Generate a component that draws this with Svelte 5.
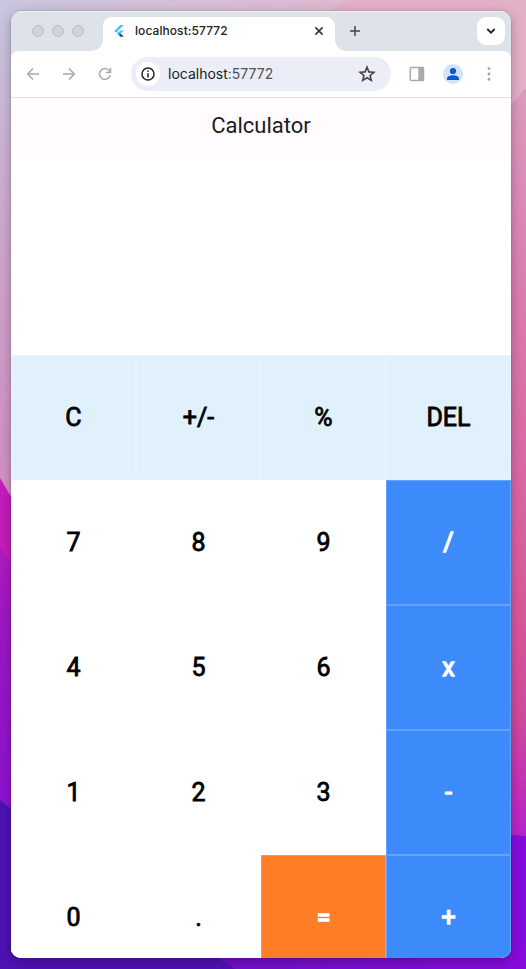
<script>
  const keys = [
    ['C', 'top'], ['+/-', 'top'], ['%', 'top'], ['DEL', 'top'],
    ['7', 'num'], ['8', 'num'], ['9', 'num'], ['/', 'op'],
    ['4', 'num'], ['5', 'num'], ['6', 'num'], ['x', 'op'],
    ['1', 'num'], ['2', 'num'], ['3', 'num'], ['-', 'op'],
    ['0', 'num'], ['.', 'num'], ['=', 'eq'], ['+', 'op']
  ];
</script>

<div class="desktop">
  <svg class="wallpaper" width="526" height="969" viewBox="0 0 526 969" aria-hidden="true">
    <defs>
      <linearGradient id="sky" x1="0" x2="1" y1="0" y2="0">
        <stop offset="0" stop-color="#c9c6df" />
        <stop offset=".45" stop-color="#d9bdd5" />
        <stop offset="1" stop-color="#e6b3cb" />
      </linearGradient>
      <linearGradient id="left" x1="0" x2="0" y1="0" y2="1">
        <stop offset="0" stop-color="#c9c6df" />
        <stop offset=".3" stop-color="#cda9cd" />
        <stop offset=".6" stop-color="#d093c4" />
        <stop offset="1" stop-color="#d38fc4" />
      </linearGradient>
      <linearGradient id="magenta" x1="0" x2="0" y1="0" y2="1">
        <stop offset="0" stop-color="#c71bc0" />
        <stop offset="1" stop-color="#bd1fae" />
      </linearGradient>
      <linearGradient id="violet" x1="0" x2="0" y1="0" y2="1">
        <stop offset="0" stop-color="#b01bbf" />
        <stop offset=".3" stop-color="#9c17c4" />
        <stop offset="1" stop-color="#8a12d2" />
      </linearGradient>
      <linearGradient id="right" x1="0" x2="0" y1="0" y2="1">
        <stop offset="0" stop-color="#dd9bbf" />
        <stop offset=".3" stop-color="#da7bac" />
        <stop offset=".7" stop-color="#d9589b" />
        <stop offset=".84" stop-color="#d1489e" />
        <stop offset=".95" stop-color="#bf2cbd" />
        <stop offset="1" stop-color="#b722c8" />
      </linearGradient>
      <linearGradient id="floor" x1="0" x2="1" y1="0" y2="0">
        <stop offset="0" stop-color="#7010c4" />
        <stop offset="1" stop-color="#860bdc" />
      </linearGradient>
    </defs>
    <rect width="526" height="969" fill="url(#sky)" />
    <rect y="11" width="200" height="700" fill="url(#left)" />
    <path d="M330 11L346 0H526V110H330z" fill="#e3b0c8" />
    <path d="M400 105H511L526 88V840H400z" fill="url(#right)" />
    <path d="M0 478L20 512V640H0z" fill="url(#magenta)" />
    <path d="M0 547L20 578V830H0z" fill="url(#violet)" />
    <path d="M0 800L20 816L240 969H0z" fill="#4e11b4" />
    <path d="M190 940L511 835L526 836V969H235z" fill="url(#floor)" />
  </svg>

  <main class="window">
    <header class="tabs">
      <div class="lights"><i></i><i></i><i></i></div>
      <div class="tab">
        <svg class="favicon" width="16" height="16" viewBox="0 0 16 16">
          <path d="M9.3 2H12.9L5.1 9.8 3.3 8z" fill="#42c5f7" />
          <path d="M9.3 7.4H12.9L9.7 10.6 7.9 8.8z" fill="#42c5f7" />
          <path d="M6.1 10.6L7.9 8.8 9.7 10.6 7.9 12.4z" fill="#29a9e8" />
          <path d="M7.9 12.4L9.7 10.6 12.9 13.7H9.3z" fill="#07569d" />
        </svg>
        <span>localhost:57772</span>
        <svg class="close" width="10" height="10" viewBox="0 0 10 10"><path d="M1.4 1.4L8.6 8.6M8.6 1.4L1.4 8.6" stroke="#333" stroke-width="1.6" /></svg>
      </div>
      <svg class="plus" width="12" height="12" viewBox="0 0 12 12"><path d="M6 1V11M1 6H11" stroke="#444" stroke-width="1.5" /></svg>
      <div class="search">
        <svg width="10" height="8" viewBox="0 0 10 8"><path d="M1.3 2L5 5.7 8.7 2" fill="none" stroke="#202124" stroke-width="1.8" /></svg>
      </div>
    </header>

    <nav class="toolbar">
      <svg width="14" height="14" viewBox="0 0 14 14"><path d="M7 1.5L1.7 7 7 12.5M2 7H13" fill="none" stroke="#aaa" stroke-width="1.5" /></svg>
      <svg class="forward" width="14" height="14" viewBox="0 0 14 14"><path d="M7 1.5L12.3 7 7 12.5M12 7H1" fill="none" stroke="#aaa" stroke-width="1.5" /></svg>
      <svg class="reload" width="14" height="14" viewBox="0 0 14 14"><path d="M12.2 8A5.4 5.4 0 1 1 11.9 4.8M12.5 1V5.5H8" fill="none" stroke="#aaa" stroke-width="1.5" /></svg>
      <div class="address">
        <div class="site">
          <svg width="14" height="14" viewBox="0 0 14 14"><circle cx="7" cy="7" r="6" fill="none" stroke="#222" stroke-width="1.5" /><path d="M7 6.2V10.4M7 3.6V5.1" stroke="#222" stroke-width="1.5" /></svg>
        </div>
        <span>localhost<em>:57772</em></span>
        <svg class="star" width="18" height="18" viewBox="0 0 18 18"><path d="M9 2.2L10.9 6.9 15.9 7.3 12.1 10.5 13.3 15.4 9 12.8 4.7 15.4 5.9 10.5 2.1 7.3 7.1 6.9z" fill="none" stroke="#444" stroke-width="1.6" /></svg>
      </div>
      <svg class="panel" width="16" height="16" viewBox="0 0 16 16"><rect x="1.3" y="1.5" width="13.2" height="13" rx="1" fill="#fff" stroke="#aaa" stroke-width="1.5" /><path d="M9.3 1H14Q15 1 15 2V14Q15 15 14 15H9.3z" fill="#aaa" /></svg>
      <div class="avatar">
        <svg width="14" height="14" viewBox="0 0 14 14"><circle cx="7" cy="4" r="3.1" fill="#0b57d0" /><path d="M1 13V11.5C1 9.4 4.3 8.2 7 8.2S13 9.4 13 11.5V13z" fill="#0b57d0" /></svg>
      </div>
      <svg class="more" width="4" height="16" viewBox="0 0 4 16" fill="#a3a3a3"><circle cx="2" cy="2.6" r="1.4" /><circle cx="2" cy="8" r="1.4" /><circle cx="2" cy="13.4" r="1.4" /></svg>
    </nav>

    <h1>Calculator</h1>
    <div class="display"></div>
    <div class="keypad">
      {#each keys as [label, kind]}
        <button class={kind}>{label}</button>
      {/each}
    </div>
  </main>
</div>

<style>
  .desktop {
    position: relative;
    width: 526px;
    height: 969px;
    padding: 11px 15px 11px 11px;
    box-sizing: border-box;
    overflow: hidden;
    font-family: Roboto, sans-serif;
  }
  .wallpaper { position: absolute; inset: 0; }
  .window {
    position: relative;
    width: 500px;
    height: 947px;
    display: flex;
    flex-direction: column;
    overflow: hidden;
    border-radius: 10px;
    background: linear-gradient(#dee3e9 60px, #fff 60px);
    box-shadow: 0 0 1px rgba(0, 0, 0, .55), 0 3px 12px rgba(0, 0, 0, .28);
  }
  svg { display: block; flex: none; }
  .tabs {
    flex: none;
    height: 40px;
    box-sizing: border-box;
    display: flex;
    align-items: flex-start;
    background: #dee3e9;
    box-shadow: inset 0 1px #eef0f3;
  }
  .lights { display: flex; gap: 8px; padding: 14px 0 0 21px; }
  .lights i {
    width: 12px;
    height: 12px;
    box-sizing: border-box;
    border: 1px solid #bbbec0;
    border-radius: 50%;
    background: #d1d4d6;
  }
  .tab {
    position: relative;
    width: 232px;
    height: 34px;
    margin: 6px 0 0 19px;
    box-sizing: border-box;
    padding: 0 11px 6px 8px;
    display: flex;
    align-items: center;
    background: #fff;
    border-radius: 9px 9px 0 0;
    font: 500 12px/16px Inter, sans-serif;
    letter-spacing: .07px;
    color: #222;
  }
  .tab::before, .tab::after {
    content: '';
    position: absolute;
    bottom: 0;
    width: 11px;
    height: 11px;
  }
  .tab::before { left: -11px; background: radial-gradient(circle at 0 0, transparent 10.5px, #fff 11px); }
  .tab::after { right: -11px; background: radial-gradient(circle at 100% 0, transparent 10.5px, #fff 11px); }
  .tab span { margin-left: 8px; }
  .close { margin-left: auto; }
  .plus { margin: 14px 0 0 14px; }
  .search {
    width: 28px;
    height: 28px;
    margin: 6px 6px 0 auto;
    border-radius: 9px;
    background: #fff;
    display: flex;
    align-items: center;
    justify-content: center;
  }
  .toolbar {
    flex: none;
    height: 46px;
    background: #fff;
    border-radius: 8px 8px 0 0;
    display: flex;
    align-items: center;
    padding: 0 20px 0 15px;
  }
  .forward { margin-left: 22px; }
  .reload { margin-left: 22px; }
  .address {
    width: 260px;
    height: 34px;
    margin-left: 19px;
    box-sizing: border-box;
    padding: 0 15px 0 5px;
    display: flex;
    align-items: center;
    border-radius: 17px;
    background: #ebeef7;
    font: 400 14px/20px Inter, sans-serif;
    color: #222;
  }
  .site {
    width: 24px;
    height: 24px;
    border-radius: 50%;
    background: #fff;
    display: flex;
    align-items: center;
    justify-content: center;
  }
  .address span { margin-left: 8px; }
  .address em { font-style: normal; color: #505154; }
  .star { margin-left: auto; }
  .panel { margin-left: 18px; }
  .avatar {
    width: 20px;
    height: 20px;
    margin-left: 18px;
    border-radius: 50%;
    background: #d3e3fd;
    display: flex;
    align-items: center;
    justify-content: center;
  }
  .more { margin-left: 24px; }
  h1 {
    flex: none;
    height: 57px;
    box-sizing: border-box;
    border-top: 1px solid #dedfe1;
    margin: 0;
    background: #fffbff;
    color: #1c1b1f;
    font: 400 22px/56px Roboto, sans-serif;
    text-align: center;
  }
  .display { flex: none; height: 201px; background: #fff; }
  .keypad {
    flex: 1;
    min-height: 0;
    overflow: hidden;
    background: #fff;
    display: grid;
    grid-template-columns: repeat(4, 125px);
    grid-auto-rows: 125px;
  }
  button {
    border: 1px solid #fff;
    padding: 1px 0 0;
    margin: 0;
    background: #fff;
    color: #000;
    font: 400 25px/30px Roboto, sans-serif;
    -webkit-text-stroke: .8px currentColor;
  }
  .top { background: #e1f1fc; border-color: #e8f4fc; }
  .op { background: #3d8bfb; border-color: #64a2fb; }
  .eq { background: #ff7d26; border-color: #ff9650; }
  .op, .eq { color: #fff; -webkit-text-stroke-width: 1.3px; }
</style>
